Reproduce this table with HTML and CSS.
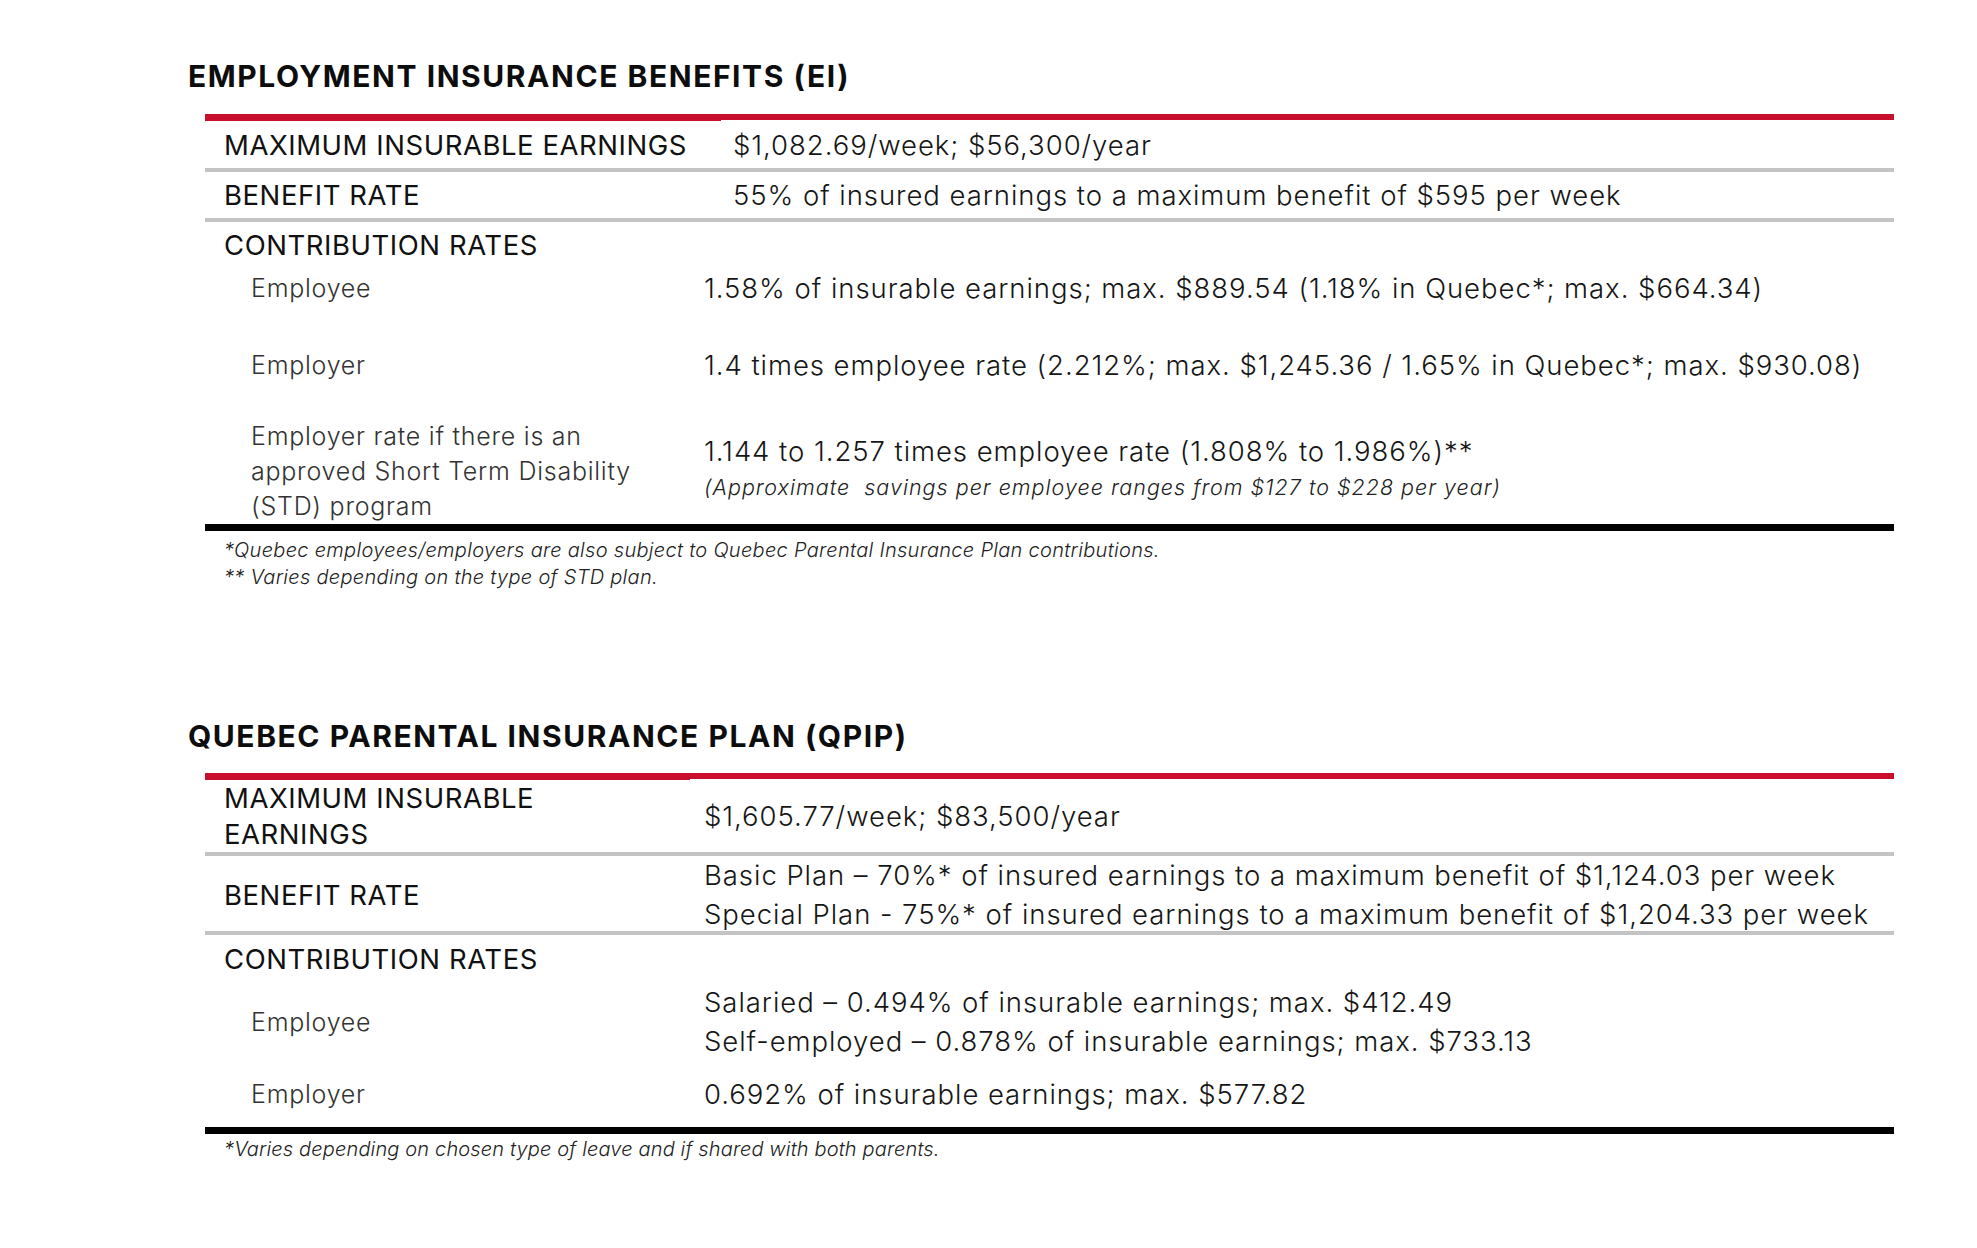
FILE: index.html
```html
<!DOCTYPE html>
<html lang="en">
<head>
<meta charset="utf-8">
<title>Employment Insurance Benefits</title>
<link rel="stylesheet" href="styles.css">
</head>
<body>
<main class="page">
  <section class="block block--ei">
    <h2 class="title">EMPLOYMENT INSURANCE BENEFITS (EI)</h2>
    <div class="table">
      <div class="topbar"><span class="topbar__left"></span><span class="topbar__right"></span></div>
      <div class="row row--main row--h47">
        <div class="label">MAXIMUM INSURABLE EARNINGS</div>
        <div class="value">$1,082.69/week; $56,300/year</div>
      </div>
      <div class="sep"></div>
      <div class="row row--main row--h46">
        <div class="label">BENEFIT RATE</div>
        <div class="value">55% of insured earnings to a maximum benefit of $595 per week</div>
      </div>
      <div class="sep"></div>
      <div class="row row--head row--h46">
        <div class="label">CONTRIBUTION RATES</div>
      </div>
      <div class="row row--sub row--h39">
        <div class="sublabel">Employee</div>
        <div class="value">1.58% of insurable earnings; max. $889.54 (1.18% in Quebec*; max. $664.34)</div>
      </div>
      <div class="row row--sub row--h39 row--gap38">
        <div class="sublabel">Employer</div>
        <div class="value">1.4 times employee rate (2.212%; max. $1,245.36 / 1.65% in Quebec*; max. $930.08)</div>
      </div>
      <div class="row row--sub row--std">
        <div class="sublabel sublabel--multi">Employer rate if there is an<br>approved Short Term Disability<br>(STD) program</div>
        <div class="value value--std">
          <div class="value__line">1.144 to 1.257 times employee rate (1.808% to 1.986%)**</div>
          <div class="value__note">(Approximate&nbsp; savings per employee ranges from $127 to $228 per year)</div>
        </div>
      </div>
      <div class="endbar"></div>
    </div>
    <div class="notes notes--ei">
      <p>*Quebec employees/employers are also subject to Quebec Parental Insurance Plan contributions.</p>
      <p>** Varies depending on the type of STD plan.</p>
    </div>
  </section>

  <section class="block block--qpip">
    <h2 class="title">QUEBEC PARENTAL INSURANCE PLAN (QPIP)</h2>
    <div class="table">
      <div class="topbar"><span class="topbar__left"></span><span class="topbar__right"></span></div>
      <div class="row row--main row--h72">
        <div class="label label--multi">MAXIMUM INSURABLE<br>EARNINGS</div>
        <div class="value">$1,605.77/week; $83,500/year</div>
      </div>
      <div class="sep"></div>
      <div class="row row--main row--h75">
        <div class="label">BENEFIT RATE</div>
        <div class="value value--lines">Basic Plan – 70%* of insured earnings to a maximum benefit of $1,124.03 per week<br>Special Plan - 75%* of insured earnings to a maximum benefit of $1,204.33 per week</div>
      </div>
      <div class="sep"></div>
      <div class="row row--head row--h48">
        <div class="label">CONTRIBUTION RATES</div>
      </div>
      <div class="row row--sub row--h78">
        <div class="sublabel">Employee</div>
        <div class="value value--lines">Salaried – 0.494% of insurable earnings; max. $412.49<br>Self-employed – 0.878% of insurable earnings; max. $733.13</div>
      </div>
      <div class="row row--sub row--h66">
        <div class="sublabel">Employer</div>
        <div class="value">0.692% of insurable earnings; max. $577.82</div>
      </div>
      <div class="endbar"></div>
    </div>
    <div class="notes notes--qpip">
      <p>*Varies depending on chosen type of leave and if shared with both parents.</p>
    </div>
  </section>
</main>
</body>
</html>
```

FILE: styles.css
```css
html, body {
  margin: 0;
  padding: 0;
  background: #ffffff;
}

body {
  font-family: Inter, "Liberation Sans", Arial, sans-serif;
  color: #111111;
  width: 1977px;
  height: 1248px;
  overflow: hidden;
}

.page {
  padding-left: 188px;
}

.block--ei {
  padding-top: 58px;
}

.block--qpip {
  padding-top: 127px;
}

.title {
  margin: 0;
  font-size: 30px;
  line-height: 36px;
  font-weight: 700;
  letter-spacing: 1.55px;
  color: #0d0d0d;
}

.block--ei .title { margin-bottom: 20px; }
.block--qpip .title { margin-bottom: 19px; }

.table {
  margin-left: 17px;
  width: 1689px;
  --col: 516px;
  --subcol: 499px;
  --pad: 12px;
}

.block--qpip .table {
  --col: 485px;
  --subcol: 499px;
  --pad: 14px;
}

.topbar {
  display: flex;
  align-items: flex-start;
  height: 7px;
}

.topbar__left {
  width: var(--col);
  height: 7px;
  background: #c8102e;
}

.topbar__right {
  flex: 1;
  height: 6px;
  background: #c8102e;
}

.row {
  display: grid;
  align-items: center;
}

.row--main,
.row--head {
  grid-template-columns: var(--col) 1fr;
}

.row--sub {
  grid-template-columns: var(--subcol) 1fr;
}

.row--h39 { height: 39px; }
.row--h46 { height: 46px; }
.row--h47 { height: 47px; }
.row--h48 { height: 48px; }
.row--h66 { height: 66px; }
.row--h72 { height: 72px; }
.row--h75 { height: 75px; }
.row--h78 { height: 78px; }
.row--gap38 { margin-top: 38px; }

.row--std {
  margin-top: 35px;
}

.label {
  padding-left: 19px;
  font-size: 27.5px;
  line-height: 30px;
  font-weight: 400;
  letter-spacing: 0.55px;
  color: #111111;
}

.label--multi {
  line-height: 36px;
}

.sublabel {
  padding-left: 46px;
  font-size: 25px;
  line-height: 30px;
  font-weight: 300;
  letter-spacing: 0.75px;
  color: #333333;
}

.sublabel--multi {
  line-height: 35px;
}

.value {
  font-size: 27.5px;
  line-height: 30px;
  font-weight: 300;
  letter-spacing: 0.95px;
  color: #161616;
  white-space: nowrap;
}

.row--main .value {
  padding-left: var(--pad);
}

.value--lines {
  line-height: 39px;
}

.value--std {
  padding-bottom: 6px;
}

.value__line {
  line-height: 36px;
}

.value__note {
  font-size: 21.5px;
  line-height: 36px;
  font-style: italic;
  letter-spacing: 1px;
  color: #222222;
}

.sep {
  height: 4px;
  background: #c4c4c4;
}

.endbar {
  height: 7px;
  background: #000000;
}

.notes {
  margin-left: 36px;
  font-size: 20px;
  font-style: italic;
  font-weight: 300;
  letter-spacing: 0.3px;
  color: #222222;
}

.notes p {
  margin: 0;
}

.notes--ei {
  margin-top: 6px;
  line-height: 27px;
}

.notes--qpip {
  margin-top: 4px;
  line-height: 22px;
  letter-spacing: 0.15px;
}
```
